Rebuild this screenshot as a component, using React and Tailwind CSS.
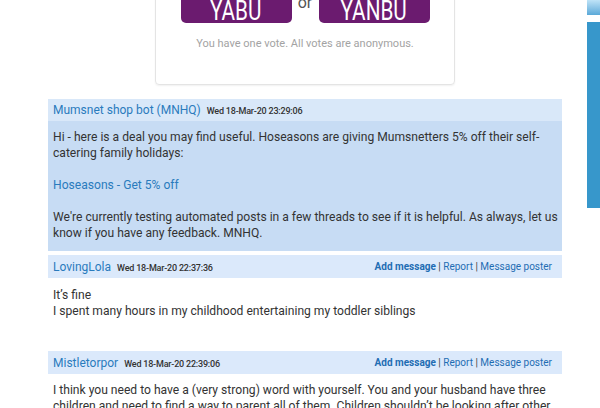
import React from "react";

const Post = ({ name, date, actions, headerBg, bodyBg, children, bodyClass }) => (
  <div>
    <div className={`h-[23px] flex items-center justify-between px-[5px] ${headerBg}`}>
      <div className="flex items-baseline">
        <span className="text-[12px] text-[#2a7bbd]">{name}</span>
        <span className="ml-[6px] text-[9px] font-medium tracking-[-0.2px] text-[#333]">{date}</span>
      </div>
      {actions && (
        <div className="text-[10px] text-[#444] pr-[5px] whitespace-nowrap">
          <span className="font-bold text-[#1f6db3]">Add message</span>
          {" | "}
          <span className="text-[#1f6db3]">Report</span>
          {" | "}
          <span className="text-[#1f6db3]">Message poster</span>
        </div>
      )}
    </div>
    <div className={`px-[5px] text-[12.1px] leading-[16px] text-[#333] whitespace-nowrap ${bodyBg} ${bodyClass}`}>
      {children}
    </div>
  </div>
);

export default function App() {
  return (
    <div className="w-[600px] h-[408px] overflow-hidden bg-white flex font-['Roboto',sans-serif]">
      <main className="ml-[48px] w-[514px] shrink-0">
        {/* poll */}
        <div className="mx-auto w-[300px] mt-[-30px] border border-[#e4e4e4] rounded-[4px] shadow-[0_1px_2px_rgba(0,0,0,0.06)] pt-[8px] pb-[32px]">
          <div className="flex justify-center">
            <div className="w-[111px] h-[44px] bg-[#6b1b6f] rounded-[5px] flex items-end justify-center text-white text-[28px] leading-[25px] overflow-hidden">
              <span className="inline-block scale-x-[0.74]">YABU</span>
            </div>
            <span className="w-[27px] text-center self-start mt-[16px] text-[16px] leading-none text-[#555]">or</span>
            <div className="w-[111px] h-[44px] bg-[#6b1b6f] rounded-[5px] flex items-end justify-center text-white text-[28px] leading-[25px] overflow-hidden">
              <span className="inline-block scale-x-[0.74]">YANBU</span>
            </div>
          </div>
          <p className="mt-[13px] text-center text-[11px] leading-[16px] text-[#a3a3a3]">
            You have one vote. All votes are anonymous.
          </p>
        </div>

        <div className="mt-[14px]">
          <Post
            name="Mumsnet shop bot (MNHQ)"
            date="Wed 18-Mar-20 23:29:06"
            headerBg="bg-[#d9e8f9] !h-[22px]"
            bodyBg="bg-[#c7dcf4]"
            bodyClass="pt-[8px] pb-[10px]"
          >
            <p>
              Hi - here is a deal you may find useful. Hoseasons are giving Mumsnetters 5% off their self-
              <br />
              catering family holidays:
            </p>
            <br />
            <p className="text-[#2a7bbd]">Hoseasons - Get 5% off</p>
            <br />
            <p>
              We're currently testing automated posts in a few threads to see if it is helpful. As always, let us
              <br />
              know if you have any feedback. MNHQ.
            </p>
          </Post>
        </div>

        <div className="mt-[4px]">
          <Post
            name="LovingLola"
            date="Wed 18-Mar-20 22:37:36"
            actions
            headerBg="bg-[#dbe9fb]"
            bodyBg="bg-white"
            bodyClass="pt-[9px] pb-[32px]"
          >
            <p>It’s fine</p>
            <p>I spent many hours in my childhood entertaining my toddler siblings</p>
          </Post>
        </div>

        <Post
          name="Mistletorpor"
          date="Wed 18-Mar-20 22:39:06"
          actions
          headerBg="bg-[#dbe9fb]"
          bodyBg="bg-white"
          bodyClass="pt-[8px] pb-[20px]"
        >
          <p>
            I think you need to have a (very strong) word with yourself. You and your husband have three
            <br />
            children and need to find a way to parent all of them. Children shouldn’t be looking after other
            <br />
            children.
          </p>
        </Post>
      </main>

      <aside className="ml-[25px] w-[13px] shrink-0">
        <div className="h-[15px] bg-gradient-to-b from-[#bfe3f7] to-[#5aa9d8]" />
        <div className="mt-[7px] h-[186px] bg-[#3797cb]" />
      </aside>
    </div>
  );
}
